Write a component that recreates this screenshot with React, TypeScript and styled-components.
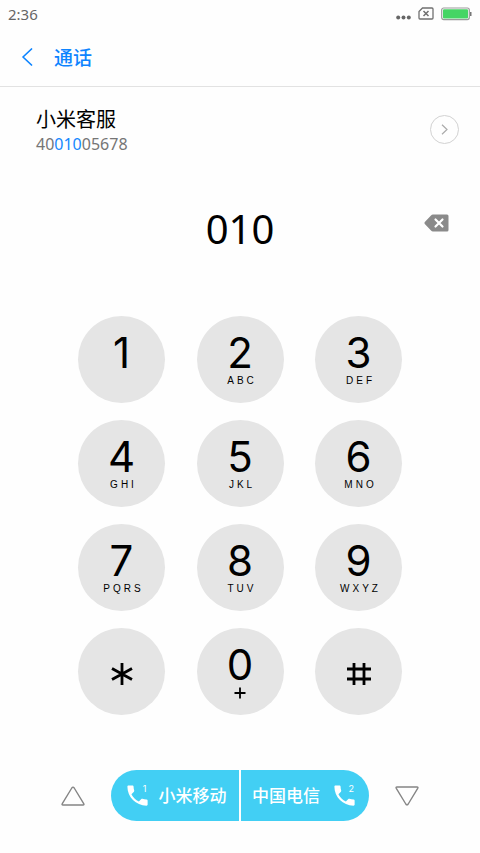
import React from "react";
import styled, { createGlobalStyle } from "styled-components";

const GlobalStyle = createGlobalStyle`
  * { box-sizing: border-box; }
  body { margin: 0; background: #fff; }
  button { font: inherit; color: inherit; border: 0; padding: 0; background: none; cursor: pointer; }
  svg { display: block; }
`;

const Page = styled.div`
  min-height: 100vh;
  display: flex;
  flex-direction: column;
  background: #fefefe;
  color: #000;
  font-family: "Noto Sans", "Noto Sans CJK SC", sans-serif;
`;

const StatusBar = styled.div`
  display: flex;
  align-items: center;
  justify-content: space-between;
  height: 28px;
  padding: 0 8px;
  font-size: 15px;
  line-height: 20px;
  color: #666;
`;

const StatusIcons = styled.div`
  display: flex;
  align-items: center;
  gap: 7px;
`;

const Header = styled.header`
  display: flex;
  align-items: center;
  gap: 16px;
  height: 59px;
  padding: 0 16px;
  border-bottom: 1px solid #e2e2e2;
  color: #0d84ff;
`;

const BackButton = styled.button`
  display: flex;
  justify-content: center;
  width: 22px;
`;

const Title = styled.h1`
  margin: 0;
  padding-top: 2px;
  font-size: 19px;
  line-height: 28px;
  font-weight: 500;
`;

const Contact = styled.section`
  display: flex;
  align-items: center;
  justify-content: space-between;
  height: 85px;
  padding: 0 21px 0 36px;
`;

const ContactName = styled.div`
  font-size: 20px;
  line-height: 28px;
`;

const ContactNumber = styled.div`
  font-size: 16px;
  line-height: 20px;
  color: #757575;
`;

const Match = styled.span`
  color: #1688ff;
`;

const DetailButton = styled.button`
  display: flex;
  align-items: center;
  justify-content: center;
  width: 29px;
  height: 29px;
  border: 1px solid #d2d2d2;
  border-radius: 50%;
`;

const Entry = styled.section`
  display: grid;
  grid-template-columns: 1fr auto 1fr;
  align-items: start;
  height: 144px;
  padding: 27px 31px 0;
`;

const Digits = styled.output`
  grid-column: 2;
  font-size: 40px;
  line-height: 60px;
`;

const DeleteButton = styled.button`
  justify-self: end;
  padding: 15px 0;
`;

const Keypad = styled.section`
  display: grid;
  grid-template-columns: repeat(3, 87px);
  justify-content: space-between;
  row-gap: 17px;
  padding: 0 78px;
`;

const Key = styled.button`
  display: flex;
  flex-direction: column;
  align-items: center;
  height: 87px;
  padding-top: 14px;
  border-radius: 50%;
  background: #e5e5e5;
  font-family: Inter, sans-serif;
`;

const KeyDigit = styled.span`
  font-size: 42px;
  line-height: 45px;
  font-weight: 400;
`;

const KeyLetters = styled.span`
  padding-left: 4px;
  font-family: "Liberation Sans", sans-serif;
  font-size: 10px;
  line-height: 12px;
  letter-spacing: 3px;
`;

const KeySymbol = styled.span`
  display: flex;
  flex: 1;
  align-items: center;
  padding-bottom: 10px;
`;

const CallBar = styled.footer`
  display: flex;
  align-items: center;
  justify-content: space-between;
  margin-top: auto;
  padding: 0 61px 32px;
`;

const CallButtons = styled.div`
  display: flex;
  gap: 2px;
  height: 51px;
  border-radius: 26px;
  overflow: hidden;
`;

const CallButton = styled.button<{ $gap: number }>`
  display: flex;
  align-items: center;
  justify-content: center;
  gap: ${(p) => p.$gap}px;
  width: 128px;
  background: #42cff4;
  color: #fff;
  font-size: 17px;
  line-height: 24px;
  font-weight: 500;
`;

const PhoneWrap = styled.span`
  position: relative;
`;

const SimNumber = styled.span`
  position: absolute;
  top: 2px;
  right: 4px;
  font-family: Inter, sans-serif;
  font-size: 9px;
  line-height: 10px;
  font-weight: 400;
`;

const letters: [string, string][] = [
  ["1", ""], ["2", "ABC"], ["3", "DEF"],
  ["4", "GHI"], ["5", "JKL"], ["6", "MNO"],
  ["7", "PQRS"], ["8", "TUV"], ["9", "WXYZ"],
];

function Phone({ sim }: { sim: string }) {
  return (
    <PhoneWrap>
      <svg width="27" height="27" viewBox="0 0 24 24" fill="currentColor" aria-hidden="true">
        <path d="M6.62 10.79c1.44 2.83 3.76 5.14 6.59 6.59l2.2-2.2c.27-.27.67-.36 1.02-.24 1.12.37 2.33.57 3.57.57.55 0 1 .45 1 1V20c0 .55-.45 1-1 1-9.39 0-17-7.61-17-17 0-.55.45-1 1-1h3.5c.55 0 1 .45 1 1 0 1.25.2 2.45.57 3.57.11.35.03.74-.25 1.02l-2.2 2.2z" />
      </svg>
      <SimNumber>{sim}</SimNumber>
    </PhoneWrap>
  );
}

function Triangle({ down = false }: { down?: boolean }) {
  return (
    <svg width="24" height="20" viewBox="0 0 24 20" fill="none" stroke="#858585" strokeWidth="1.4" strokeLinejoin="round" aria-hidden="true">
      {down
        ? <path d="M2 1h20q1.5 0 .7 1.4L13.2 18q-1.2 1.8-2.4 0L1.3 2.4Q.5 1 2 1Z" />
        : <path d="M2 19h20q1.5 0 .7-1.4L13.2 2q-1.2-1.8-2.4 0L1.3 17.6Q.5 19 2 19Z" />}
    </svg>
  );
}

export default function App() {
  return (
    <Page>
      <GlobalStyle />
      <StatusBar>
        <span>2:36</span>
        <StatusIcons>
          <svg width="15" height="14" viewBox="0 0 15 14" fill="#666" aria-hidden="true">
            <circle cx="2.2" cy="10.5" r="2" /><circle cx="7.5" cy="10.5" r="2" /><circle cx="12.8" cy="10.5" r="2" />
          </svg>
          <svg width="16" height="14" viewBox="0 0 16 14" fill="none" stroke="#707070" aria-hidden="true">
            <path d="M4.5 1H14q1 0 1 1v9q0 1-1 1H2q-1 0-1-1V4.5Z" strokeWidth="1.3" />
            <path d="m5.5 4 5 5m0-5-5 5" strokeWidth="1.5" />
          </svg>
          <svg width="31" height="14" viewBox="0 0 31 14" aria-hidden="true">
            <rect x=".7" y="1" width="27.6" height="11.6" rx="2" fill="#fff" stroke="#999" strokeWidth="1.2" />
            <rect x="2" y="2.2" width="25" height="9.2" rx="1" fill="#45d564" />
            <path d="M29 5h1.5v4H29Z" fill="#777" />
          </svg>
        </StatusIcons>
      </StatusBar>

      <Header>
        <BackButton aria-label="返回">
          <svg width="11" height="18" viewBox="0 0 11 18" fill="none" stroke="currentColor" strokeWidth="1.7" strokeLinecap="round" strokeLinejoin="round">
            <path d="M9.5 1 1 9l8.5 8" />
          </svg>
        </BackButton>
        <Title>通话</Title>
      </Header>

      <Contact>
        <div>
          <ContactName>小米客服</ContactName>
          <ContactNumber>40<Match>010</Match>05678</ContactNumber>
        </div>
        <DetailButton aria-label="详情">
          <svg width="7" height="11" viewBox="0 0 7 11" fill="none" stroke="#aaa" strokeWidth="1.2">
            <path d="m1 .8 5 4.7-5 4.7" />
          </svg>
        </DetailButton>
      </Contact>

      <Entry>
        <Digits>010</Digits>
        <DeleteButton aria-label="删除">
          <svg width="25" height="18" viewBox="0 0 25 18">
            <path d="M9 .5h14q1.5 0 1.5 1.5v14q0 1.5-1.5 1.5H9q-1.2 0-2-.9L.8 10q-.8-1 0-2L7 1.4Q7.8.5 9 .5Z" fill="#8a8a8a" />
            <path d="m11.5 5.5 7 7m0-7-7 7" stroke="#fff" strokeWidth="2.2" strokeLinecap="round" />
          </svg>
        </DeleteButton>
      </Entry>

      <Keypad>
        {letters.map(([digit, text]) => (
          <Key key={digit}>
            <KeyDigit>{digit}</KeyDigit>
            {text && <KeyLetters>{text}</KeyLetters>}
          </Key>
        ))}
        <Key aria-label="*">
          <KeySymbol>
            <svg width="22" height="24" viewBox="0 0 22 24" fill="none" stroke="#000" strokeWidth="2.8">
              <path d="M11 1v22M1 6.5l20 11M21 6.5l-20 11" />
            </svg>
          </KeySymbol>
        </Key>
        <Key>
          <KeyDigit>0</KeyDigit>
          <svg width="12" height="12" viewBox="0 0 12 12" stroke="#000" strokeWidth="1.8" role="img" aria-label="+">
            <path d="M6 .5v11M.5 6h11" />
          </svg>
        </Key>
        <Key aria-label="#">
          <KeySymbol>
            <svg width="24" height="24" viewBox="0 0 24 24" fill="none" stroke="#000" strokeWidth="2.8">
              <path d="M7 1v22M17 1v22M0 7h24M0 17h24" />
            </svg>
          </KeySymbol>
        </Key>
      </Keypad>

      <CallBar>
        <button aria-label="收起"><Triangle /></button>
        <CallButtons>
          <CallButton $gap={8}><Phone sim="1" />小米移动</CallButton>
          <CallButton $gap={11}>中国电信<Phone sim="2" /></CallButton>
        </CallButtons>
        <button aria-label="展开"><Triangle down /></button>
      </CallBar>
    </Page>
  );
}
